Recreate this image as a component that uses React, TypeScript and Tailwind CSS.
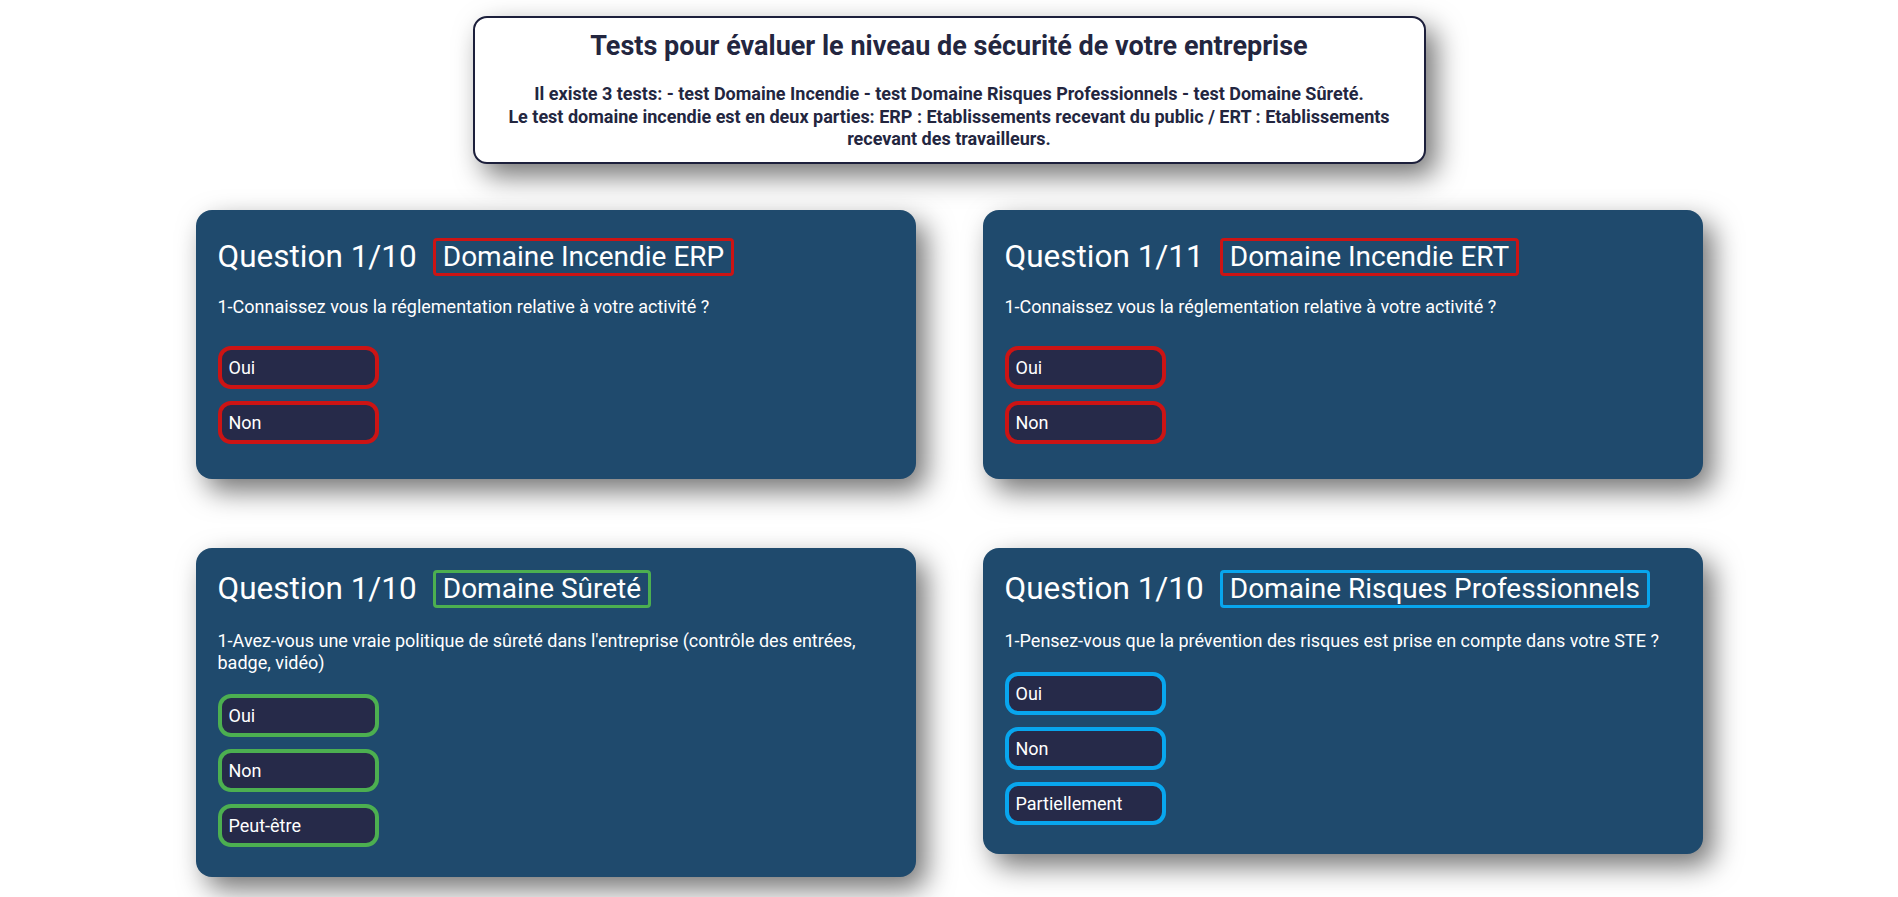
import React from "react";

type CardProps = {
  count: string;
  domain: string;
  question: string;
  options: string[];
  badgeCls: string;
  btnCls: string;
  padCls: string;
  textCls: string;
  btnsCls: string;
};

function Card({ count, domain, question, options, badgeCls, btnCls, padCls, textCls, btnsCls }: CardProps) {
  return (
    <div
      className={`bg-[#1f4a6d] rounded-[16px] pl-[22px] pr-[22px] text-white shadow-[10px_12px_28px_rgba(0,0,0,0.55)] ${padCls}`}
    >
      <div className="flex items-center h-[38px]">
        <span className="text-[31.5px] leading-[38px] font-normal">{count}</span>
        <span
          className={`ml-[16px] h-[38px] flex items-center border-[3px] rounded-[4px] px-[7px] text-[28px] leading-[32px] ${badgeCls}`}
        >
          {domain}
        </span>
      </div>
      <p className={`text-[18px] leading-[22px] ${textCls}`}>{question}</p>
      <div className={`flex flex-col gap-[12px] ${btnsCls}`}>
        {options.map((o) => (
          <div
            key={o}
            className={`w-[161px] h-[43px] border-4 rounded-[13px] bg-[#262a49] flex items-center px-[7px] text-[18px] ${btnCls}`}
          >
            {o}
          </div>
        ))}
      </div>
    </div>
  );
}

export default function App() {
  return (
    <div
      className="min-h-screen w-full bg-white flex flex-col items-center pt-[16px] pb-[20px]"
      style={{ fontFamily: "Roboto, 'Noto Sans', Arial, sans-serif" }}
    >
      <div className="w-[953px] bg-white border-2 border-[#1c1f3b] rounded-[14px] pt-[12px] pb-[11px] px-[20px] text-center text-[#23263f] shadow-[10px_12px_28px_rgba(0,0,0,0.55)]">
        <h1 className="text-[27px] leading-[32px] font-bold">
          Tests pour évaluer le niveau de sécurité de votre entreprise
        </h1>
        <p className="mt-[21px] text-[18px] leading-[22.5px] font-bold">
          Il existe 3 tests: - test Domaine Incendie - test Domaine Risques Professionnels - test Domaine Sûreté.
          <br />
          Le test domaine incendie est en deux parties: ERP : Etablissements recevant du public / ERT : Etablissements
          recevant des travailleurs.
        </p>
      </div>

      <div className="mt-[46px] grid grid-cols-[720px_720px] gap-x-[67px] gap-y-[69px] items-start">
        <Card
          count="Question 1/10"
          domain="Domaine Incendie ERP"
          question="1-Connaissez vous la réglementation relative à votre activité ?"
          options={["Oui", "Non"]}
          badgeCls="border-[#cc1414]"
          btnCls="border-[#cc1414]"
          padCls="pt-[28px] pb-[35px]"
          textCls="mt-[20px]"
          btnsCls="mt-[28px]"
        />
        <Card
          count="Question 1/11"
          domain="Domaine Incendie ERT"
          question="1-Connaissez vous la réglementation relative à votre activité ?"
          options={["Oui", "Non"]}
          badgeCls="border-[#cc1414]"
          btnCls="border-[#cc1414]"
          padCls="pt-[28px] pb-[35px]"
          textCls="mt-[20px]"
          btnsCls="mt-[28px]"
        />
        <Card
          count="Question 1/10"
          domain="Domaine Sûreté"
          question="1-Avez-vous une vraie politique de sûreté dans l'entreprise (contrôle des entrées, badge, vidéo)"
          options={["Oui", "Non", "Peut-être"]}
          badgeCls="border-[#4caf50]"
          btnCls="border-[#4caf50]"
          padCls="pt-[22px] pb-[30px]"
          textCls="mt-[22px]"
          btnsCls="mt-[20px]"
        />
        <Card
          count="Question 1/10"
          domain="Domaine Risques Professionnels"
          question="1-Pensez-vous que la prévention des risques est prise en compte dans votre STE ?"
          options={["Oui", "Non", "Partiellement"]}
          badgeCls="border-[#08a6ee]"
          btnCls="border-[#08a6ee]"
          padCls="pt-[22px] pb-[29px]"
          textCls="mt-[22px]"
          btnsCls="mt-[20px]"
        />
      </div>
    </div>
  );
}
